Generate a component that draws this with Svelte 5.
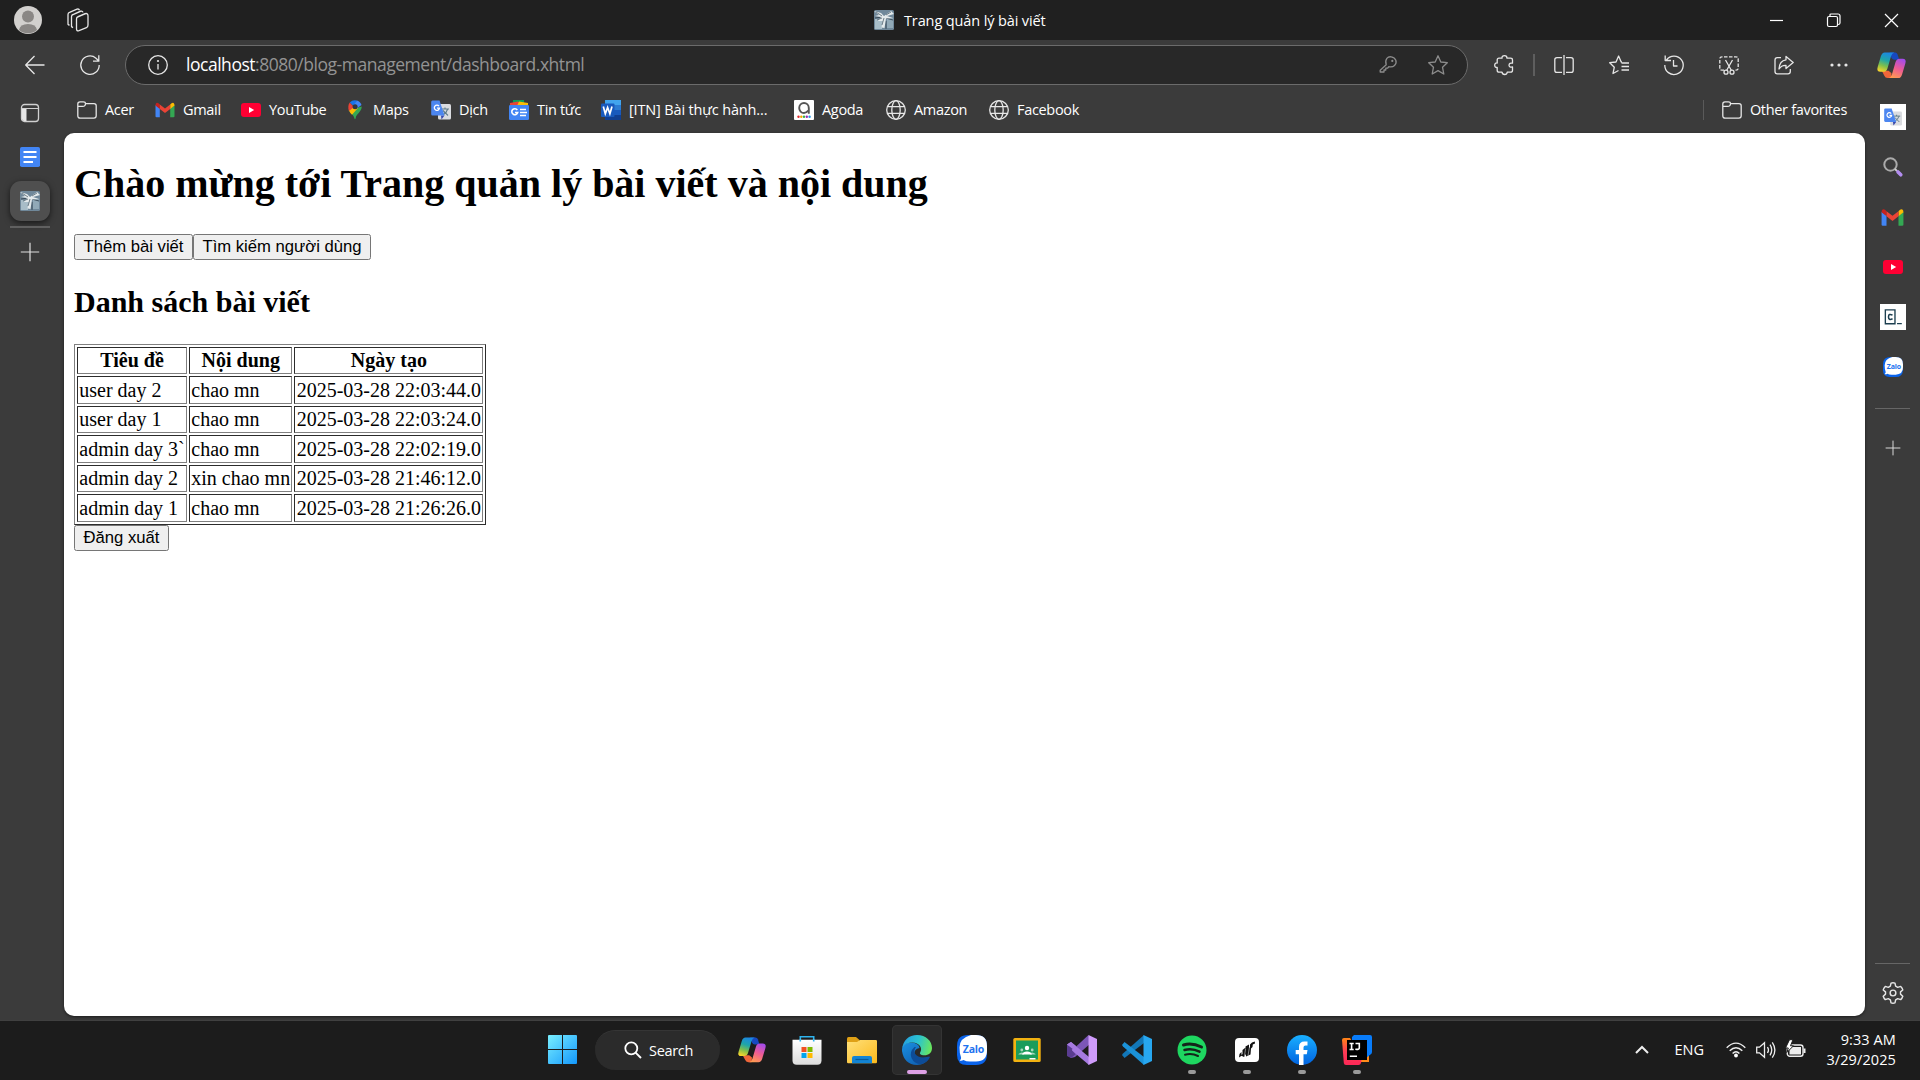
<script>
  const bookmarks = [
    { icon: 'folder', label: 'Acer', width: 78 },
    { icon: 'gmail', label: 'Gmail', width: 86 },
    { icon: 'youtube', label: 'YouTube', width: 104 },
    { icon: 'maps', label: 'Maps', width: 86 },
    { icon: 'translate', label: 'Dịch', width: 78 },
    { icon: 'news', label: 'Tin tức', width: 92 },
    { icon: 'word', label: '[ITN] Bài thực hành...', width: 193, loose: true },
    { icon: 'agoda', label: 'Agoda', width: 92 },
    { icon: 'globe', label: 'Amazon', width: 103 },
    { icon: 'globe', label: 'Facebook', width: 110 }
  ];
  const tools = ['split', 'favorites', 'history', 'snip', 'share', 'dots'];
  const posts = [
    ['user day 2', 'chao mn', '2025-03-28 22:03:44.0'],
    ['user day 1', 'chao mn', '2025-03-28 22:03:24.0'],
    ['admin day 3`', 'chao mn', '2025-03-28 22:02:19.0'],
    ['admin day 2', 'xin chao mn', '2025-03-28 21:46:12.0'],
    ['admin day 1', 'chao mn', '2025-03-28 21:26:26.0']
  ];
  const apps = [
    { icon: 'copilot', size: 28 },
    { icon: 'store', size: 30 },
    { icon: 'explorer', size: 30 },
    { icon: 'edge', size: 30, active: true },
    { icon: 'zalo', size: 30 },
    { icon: 'classroom', size: 30 },
    { icon: 'vs', size: 30 },
    { icon: 'vscode', size: 30 },
    { icon: 'spotify', size: 30, running: true },
    { icon: 'capcut', size: 30, running: true },
    { icon: 'facebook', size: 30, running: true },
    { icon: 'idea', size: 30, running: true }
  ];
  const largeGrid = apps.map((a) => a.icon);
</script>

{#snippet icon(name, size = 20)}
  <svg class="icon" width={size} height={size} viewBox={largeGrid.includes(name) ? '0 0 30 30' : '0 0 20 20'}>
    {#if name === 'folder'}
      <path class="ln" d="M.8 15.5V4Q.8 1.800 3 1.800H6.300Q8.500 1.800 8.500 3.600H17Q19.200 3.600 19.200 5.800V15.800Q19.200 18.200 16.800 18.200H3.200Q.8 18.200 .8 15.500Z M.8 6.300H5.600Q8.500 6.300 8.500 3.600" />
    {:else if name === 'gmail'}
      <path fill="#4285f4" d="M.5 5V16.200Q.5 17.200 1.600 17.200H4.800V8.200Z" />
      <path fill="#34a853" d="M19.500 5V16.200Q19.500 17.200 18.400 17.200H15.200V8.200Z" />
      <path fill="#fbbc04" d="M15.200 4.500Q17 2.300 18.600 3Q19.500 3.500 19.500 5.500L15.200 9Z" />
      <path fill="#c5221f" d="M4.800 4.500Q3 2.300 1.400 3Q.5 3.500 .5 5.500L4.800 9Z" />
      <path fill="#ea4335" d="M4.800 4.500L10 8.500L15.200 4.500V9L10 13L4.800 9Z" />
    {:else if name === 'youtube'}
      <rect y="3" width="20" height="14" rx="3" fill="#f03" /><path fill="#fff" d="M8 7L13.200 10L8 13Z" />
    {:else if name === 'maps'}
      <path fill="#34a853" d="M3.600 10C5 13 9 15 9.300 18Q10 20.500 10.700 18C11 14 17 11.500 16.700 6.500Z" />
      <path fill="#fbbc04" d="M3.800 10.300Q5 13 7 14.700L13 8L8 6Z" />
      <path fill="#ea4335" d="M4.800 2.500L9 7L4 11Q2.200 6 4.800 2.500Z" />
      <path fill="#1a73e8" d="M4.800 2.500Q7.500-.5 12 .5L9 6.500Z" /><path fill="#4285f4" d="M12 .5Q15.500 1.500 16.500 5L11 9L8.800 5Z" />
      <circle cx="10.100" cy="6.700" r="2.500" fill="#303640" />
    {:else if name === 'translate'}
      <rect x="7" y="4" width="13" height="15.500" rx="1.500" fill="#dadce0" />
      <path stroke="#607d8b" fill="none" stroke-width="1.100" d="M10.500 9H18M14 7.500V9M16.700 9Q15.500 13 12 15M12 10.500L17 15.500" />
      <path fill="#3949ab" d="M10 15.500H13.500L10.500 19.500Z" />
      <path fill="#4c86f0" d="M1.500.5H8.500L13.500 15.500H1.500Q.2 15.500 .2 14V2Q.2.5 1.500.5Z" />
      <path stroke="#fff" fill="none" stroke-width="1.300" d="M8 6.200A2.600 2.600 0 1 0 8.500 8.200H6" />
    {:else if name === 'news'}
      <path fill="#0c9d58" d="M4 0H15V6H4Z" /><path fill="#ea4335" d="M1 3L9 1.500L14 5H1Z" /><path fill="#fbbc04" d="M10 1.500L19 3V6H8Z" />
      <rect y="5" width="20" height="15" rx="1.300" fill="#4285f4" />
      <path stroke="#fff" fill="none" stroke-width="1.600" d="M8.300 10A3 3 0 1 0 8.700 12.500H6M11 9.500H17M11 12.500H18M11 15.500H17" />
    {:else if name === 'word'}
      <path fill="#41a5ee" d="M4 0H20V5H4Z" /><path fill="#2b7cd3" d="M4 5H20V10H4Z" /><path fill="#185abd" d="M4 10H20V15H4Z" /><path fill="#103f91" d="M4 15H20V20H4Z" />
      <rect y="3.500" width="13.500" height="13.500" rx="1" fill="#185abd" /><path stroke="#fff" fill="none" stroke-width="1.700" d="M2.300 6.500L4.300 13.700L6.600 7.500L8.900 13.700L11 6.500" />
    {:else if name === 'agoda'}
      <rect width="20" height="20" rx="1" fill="#fff" />
      <path stroke="#555" fill="none" stroke-width="1.900" d="M14.800 13.800V8A4.800 5 0 1 0 10 13Q12.300 13 14.300 10.500" />
      <circle cx="4.500" cy="16.800" r="1.200" fill="#e12d2d" /><circle cx="7.300" cy="16.800" r="1.200" fill="#f7a700" /><circle cx="10" cy="16.800" r="1.200" fill="#35b24a" /><circle cx="12.800" cy="16.800" r="1.200" fill="#9b26af" /><circle cx="15.600" cy="16.800" r="1.200" fill="#2397e8" />
    {:else if name === 'globe'}
      <g class="ln"><circle cx="10" cy="10" r="9.300" /><ellipse cx="10" cy="10" rx="4.200" ry="9.300" /><path d="M1.500 6.700H18.500M1.500 13.300H18.500" /></g>
    {:else if name === 'back'}
      <path class="ln" d="M19.500 10H.8M9.500 1L.7 10L9.500 19" />
    {:else if name === 'refresh'}
      <path class="ln" d="M19.200 10A9.200 9.200 0 1 1 16 3.200L18.800 6M18.800.3V6.200H13" />
    {:else if name === 'info'}
      <circle class="ln" cx="10" cy="10" r="9.300" /><path class="ln" d="M10 9V14.500" /><circle cx="10" cy="6" r="1.100" fill="#e6e6e6" />
    {:else if name === 'key'}
      <g class="ln"><path d="M8.200 9.800C6.500 4 10 1.300 13.200 1.800C18 2.500 19.600 7.500 16.500 10.500Q14.300 12.600 10.800 11.700L9.500 13.200H7.800V15H6V17H2.200V15.200Z" /></g><circle cx="14.300" cy="5.900" r="1.100" fill="#8c8c8c" />
    {:else if name === 'star'}
      <path class="ln" d="M10 .8L12.800 7L19.300 7.700L14.500 12.200L15.800 19L10 15.600L4.200 19L5.500 12.200L.7 7.700L7.200 7Z" />
    {:else if name === 'puzzle'}
      <path class="ln" d="M5 3.200H8Q7.800.7 10.500.7Q13 .7 13 3.200H16.500Q18.500 3.200 18.500 5V8.200Q15.200 7.500 15 10.200Q15.200 12.700 18.500 12V15.500Q18.500 17.200 16.500 17.200H13.200Q13 19.500 10.700 19.500Q8.300 19.500 8 17.200H5Q3.200 17.200 3.200 15.500V12.500Q.7 12.700.7 10.200Q.7 7.700 3.200 8V5Q3.200 3.200 5 3.200Z" />
    {:else if name === 'split'}
      <path class="ln" d="M8 2.600H3Q.8 2.600.8 4.800V15.200Q.8 17.400 3 17.400H8M12 2.600H17Q19.200 2.600 19.200 4.800V15.200Q19.200 17.400 17 17.400H12M10 0V20" />
    {:else if name === 'favorites'}
      <path class="ln" d="M13 7H12.200L9.600 1L7 7L.7 7.700L5.300 12.200L4 18.500L9.500 15.500M12.500 8H20M12.500 11.500H20M12.500 15H20" />
    {:else if name === 'history'}
      <path class="ln" d="M2.500 5A9.200 9.200 0 1 1 .8 10M1.200.5V5.500H7M9.500 5V11H13.500" />
    {:else if name === 'snip'}
      <path class="ln dash" d="M5 15.200H2.800Q.8 15.200.8 13V4Q.8 1.800 3 1.800H17Q19.200 1.800 19.200 4V13Q19.200 15.200 17 15.200H15" />
      <g class="ln"><path d="M6.500 5L12.300 15.300M13.500 5L7.700 15.300" /><circle cx="7" cy="17.200" r="2" /><circle cx="13" cy="17.200" r="2" /></g>
    {:else if name === 'share'}
      <path class="ln" d="M7 2.600H3.300Q1 2.600 1 5V16.500Q1 18.800 3.300 18.800H14Q16.300 18.800 16.300 16.500V14M12 1.500L19.200 7.500L12 13.500V10.300Q7.500 10 5 14Q5.500 5.500 12 4.800Z" />
    {:else if name === 'dots'}
      <g fill="#e6e6e6"><circle cx="3" cy="10" r="1.600" /><circle cx="10" cy="10" r="1.600" /><circle cx="17" cy="10" r="1.600" /></g>
    {:else if name === 'favicon'}
      <rect width="20" height="20" rx="1.500" fill="#70889a" /><path fill="#a8bdc8" d="M1 9H8V19H1Z" /><path fill="#91a9b7" d="M13 8H19V18H13Z" />
      <path stroke="#3d4e5c" fill="none" d="M1 8L8 7L19 10M12 11V19" />
      <path fill="#e4eaec" d="M0 1L7 3L10 6L17 1L20 4L13 6L19 8L12 8.500L10.500 18L7.500 17.500L8.500 11L4 11L7 7L1 6L5 5Z" />
      <path stroke="#536570" fill="none" stroke-width=".8" d="M2 2L8 6M12 5L17 2M8 8L3 10M10 8L8 15" />
    {:else if name === 'tabs'}
      <rect x="1.500" y="1.500" width="17" height="17" rx="3" fill="none" stroke="#d0d0d0" stroke-width="1.300" /><path fill="#e6e6e6" d="M2 5.500H6.500V18H4Q2 18 2 16Z" /><path stroke="#d0d0d0" d="M2 5.500H18" />
    {:else if name === 'docs'}
      <rect width="20" height="20" rx="1.800" fill="#4285f4" /><path stroke="#fff" stroke-width="2" d="M3.500 5H16.500M3.500 10H16.500M3.500 15H13" />
    {:else if name === 'plus'}
      <path stroke="#e0e0e0" stroke-width="1.200" d="M10 .8V19.200M.8 10H19.200" />
    {:else if name === 'search'}
      <circle cx="7.500" cy="7.500" r="6.200" fill="none" stroke="#aaa" stroke-width="2" /><path stroke="#d0d0d0" stroke-width="1.800" d="M12 12L14 14" /><path stroke="#b38df0" stroke-width="3.600" stroke-linecap="round" d="M15 15L17.800 17.800" />
    {:else if name === 'codecademy'}
      <path stroke="#1c3f50" stroke-width="1.500" fill="none" d="M1.500 2H12.200V17.500H1.500ZM14.500 17.300H19.800" /><path stroke="#1c3f50" stroke-width="1.700" fill="none" d="M9.500 8Q5 5.500 5 10Q5 14 9.500 12" />
    {:else if name === 'gear'}
      <path class="ln" d="M8.200 1Q10 .4 11.800 1L12.400 3.800L14.300 4.900L17 4Q18.500 5.500 18.900 7.200L16.800 9V11L18.900 12.900Q18.300 14.800 17 16L14.300 15.100L12.400 16.200L11.800 19Q10 19.600 8.200 19L7.600 16.200L5.700 15.100L3 16Q1.700 14.800 1.100 12.900L3.200 11V9L1.100 7.200Q1.600 5.500 3 4L5.700 4.900L7.600 3.800Z" /><circle class="ln" cx="10" cy="10" r="2.600" />
    {:else if name === 'chevron'}
      <path d="M4 13L10 7L16 13" stroke="#eee" stroke-width="2" fill="none" />
    {:else if name === 'wifi'}
      <g fill="none" stroke="#eee" stroke-width="1.400"><path d="M.7 7.800Q10-1.500 19.300 7.800M3.700 10.800Q10 4.500 16.300 10.800M6.600 13.500Q10 10 13.400 13.500" /></g><circle cx="10" cy="15.500" r="1.900" fill="#fff" />
    {:else if name === 'volume'}
      <path fill="none" stroke="#eee" stroke-width="1.300" d="M.7 7.200H3.500L8.500 2.700V17.300L3.500 12.800H.7ZM11.500 7Q13.500 10 11.500 13M14 4.700Q17.500 10 14 15.300M16.300 2.300Q21.500 10 16.300 17.700" />
    {:else if name === 'battery'}
      <rect x="1.300" y="5" width="15.700" height="11.300" rx="2.500" fill="none" stroke="#eee" stroke-width="1.400" /><path fill="#eee" d="M3.500 7H15V14.500H3.500ZM17.500 8.500H19.500V13H17.500Z" /><path fill="#fff" stroke="#1c1c1c" d="M3.500-.3L-.5 8H2.300L.8 12.500L7.500 5.800H4.500L7-.3Z" />
    {:else if name === 'copilot'}
      <defs>
        <linearGradient id="cpA" x1=".6" y1="0" x2=".3" y2="1"><stop offset="0" stop-color="#1c86e4" /><stop offset=".4" stop-color="#1fa6a8" /><stop offset=".7" stop-color="#7fbf4c" /><stop offset="1" stop-color="#f5d42c" /></linearGradient>
        <linearGradient id="cpB" x1=".7" y1="0" x2=".3" y2="1"><stop offset="0" stop-color="#a54bea" /><stop offset=".5" stop-color="#ee5c93" /><stop offset="1" stop-color="#ff9a52" /></linearGradient>
      </defs>
      <path fill="#1748c0" d="M13 1.500H18.800Q20.600 1.500 21.300 3.600L23 9H18Q16 9 15 7Z" />
      <path fill="#f0663a" d="M5 20.500H12L15 23L14.500 28H11Q8.500 28 7.600 25.500Z" />
      <path fill="url(#cpA)" d="M8 1.500H18Q15.500 2 14.500 5.500L10.800 18Q9.800 21.500 6.500 21.500H3.500Q-.8 21.500 .7 16.500L4 5.500Q5.200 1.500 8 1.500Z" />
      <path fill="url(#cpB)" d="M23.500 8H26.500Q30.800 8 29.300 13L26 24Q24.800 28 22 28H12Q14.500 27.500 15.500 24L19.200 11.500Q20.200 8 23.500 8Z" />
    {:else if name === 'store'}
      <defs><linearGradient id="st" x2="0" y2="1"><stop stop-color="#fff" /><stop offset="1" stop-color="#dcdcdc" /></linearGradient></defs>
      <path fill="none" stroke="#2fb4ee" stroke-width="1.600" d="M8.300 6.500V1.800H21.700V6.500" /><path fill="url(#st)" d="M.5 4.800H29.500V25.500Q29.500 29.700 25.300 29.700H4.700Q.5 29.700.5 25.500Z" /><path fill="none" stroke="#2fb4ee" stroke-width="1.600" d="M8.300 4.500V6.500M21.700 4.500V6.500" />
      <path fill="#f25022" d="M9.500 12H14.500V17H9.500Z" /><path fill="#7fba00" d="M15.500 12H20.500V17H15.500Z" /><path fill="#00a4ef" d="M9.500 18H14.500V23H9.500Z" /><path fill="#ffb900" d="M15.500 18H20.500V23H15.500Z" />
    {:else if name === 'explorer'}
      <defs><linearGradient id="ex" x2="1" y2="1"><stop stop-color="#ffe07a" /><stop offset="1" stop-color="#fbb91c" /></linearGradient></defs>
      <path fill="#dfa016" d="M0 3.500Q0 2 1.500 2H9L12.500 5V10H0Z" /><path fill="url(#ex)" d="M0 7H10L13 5H28.800Q30 5 30 6.300V27Q30 28.300 28.800 28.300H1.200Q0 28.300 0 27Z" />
      <path fill="#1384d4" d="M5 28.300V23Q5 21 7 21H23Q25 21 25 23V28.300Z" /><path stroke="#075a9b" stroke-width="1.200" d="M8.500 24.500H21.500" />
    {:else if name === 'edge'}
      <defs>
        <linearGradient id="eg1" x1="0" y1=".4" x2="1" y2=".6"><stop stop-color="#259fe0" /><stop offset=".5" stop-color="#2bc3d0" /><stop offset="1" stop-color="#6be85a" /></linearGradient>
        <linearGradient id="eg2" x2=".8" y2="1"><stop stop-color="#1a90e0" /><stop offset="1" stop-color="#0f5cae" /></linearGradient>
      </defs>
      <path fill="url(#eg2)" d="M0 14Q1 7.500 9 7.500Q17 8 17.500 13Q12 14 12.500 19Q14 25 27.500 22Q23.500 30 15 30Q2 29.500 0 16Z" />
      <path fill="#0d4c98" d="M12.500 12Q7 17 9.500 23Q12.500 29.500 20 29Q26 26.500 27.700 22.500Q28 21 26 21.800Q17 24 12.800 18.500Q11.500 15 14 12Z" />
      <path fill="url(#eg1)" d="M0 14.500C1 5 7 0 15 0C24 0 30 6 30 13C30 18 26.500 20.300 22.500 20.300C18.500 20.300 17.200 18.600 18.300 17.200C21 13 17 7.500 10.500 7.500C5 7.500 1 10 0 14.500Z" />
    {:else if name === 'zalo'}
      <path fill="#0a63ea" d="M11 0H19Q30 0 30 11V19Q30 30 19 30H10Q0 30 0 20V11Q0 0 11 0Z" />
      <path fill="#fff" d="M14 0H19Q30 0 30 11V15.500Q30 26.500 19 26.500H13Q9 26.500 6.500 25Q4.500 26.300 2.500 25.500Q4.800 24 3.800 21.500Q2.500 18 2.500 12.500Q2.500 3 14 0Z" />
      <text class="zalo" x="5.800" y="17.800" textLength="21.500">Zalo</text>
    {:else if name === 'classroom'}
      <rect x="1.300" y="3" width="27.400" height="24" rx="1.500" fill="#f2b211" /><path fill="#1a9c5b" d="M4 5.500H26V24.500H4Z" />
      <g fill="#a5d8bd"><circle cx="9.800" cy="15" r="1.400" /><circle cx="20.200" cy="15" r="1.400" /><path d="M6.500 19Q9 16.500 12 18V19.500H6.500ZM23.500 19Q21 16.500 18 18V19.500H23.500Z" /></g>
      <circle cx="15" cy="13" r="2.200" fill="#fff" /><path fill="#fff" d="M10 19.500Q11 16.500 15 16.500T20 19.500ZM17.500 23H23.500V24.500H17.500Z" />
    {:else if name === 'vs'}
      <path fill="#7c56b8" d="M4 23L8 22L24 8L21.500 0L0 20Z" /><path fill="#a67ae0" d="M0 9.500L4 7L22 22V30L2 13Z" /><path fill="#5a3c90" d="M0 9.500V21L4 23L8.500 19.300L4.500 15L6.500 13Z" /><path fill="#a67ae0" d="M0 9.500L4 7L9 11L7 15Z" /><path fill="#cf9bfb" d="M21.500 0L30 4V26L21.500 30Z" />
    {:else if name === 'vscode'}
      <path fill="#1277b8" d="M0 20L2.500 23L22 8V0L1 18.500Z" /><path fill="#1b92d8" d="M0 10L2.500 7L22 22V30L1 11.500Z" /><path fill="#27a7f0" d="M21.500 0L30 4V26L21.500 30Z" />
    {:else if name === 'spotify'}
      <circle cx="15" cy="15" r="14.500" fill="#1ed760" /><g fill="none" stroke="#14251a" stroke-linecap="round"><path stroke-width="3" d="M6.500 10Q15 7.500 24.500 12" /><path stroke-width="2.500" d="M7.500 15Q15 12.800 22.500 16.700" /><path stroke-width="2" d="M8 19.700Q15 18 21 21" /></g>
    {:else if name === 'capcut'}
      <rect x="3" y="3" width="24" height="24" rx="4" fill="#fff" /><path fill="#111" d="M7 22.500L7.500 19L9.500 17V20L10.500 19V15L13 13L13.500 14V11.500L17 9.500V12L18 13V9.500L20 7.500L22.800 6.500L23 8.500L20.800 9.500L20.500 12L19 13.500L18.500 19.500L14 21.500V19L12 22L9.500 20.800Z" /><path stroke="#fff" stroke-width=".5" d="M13.500 14L12.500 21M17.500 12L16 20.500" />
    {:else if name === 'facebook'}
      <defs><linearGradient id="fb" x2="0" y2="1"><stop stop-color="#19afff" /><stop offset="1" stop-color="#0163e0" /></linearGradient></defs>
      <circle cx="15" cy="15" r="15" fill="url(#fb)" /><path fill="#fff" d="M12 30V19.200H8.700V15H12V12Q12 6.500 17.500 6.500H20.500V10.500H18.500Q16.500 10.500 16.500 12.500V15H20.500L19.800 19.200H16.500V30Z" />
    {:else if name === 'idea'}
      <defs><linearGradient id="ij" x2="0" y2="1"><stop stop-color="#ff8516" /><stop offset=".5" stop-color="#fd3c55" /><stop offset="1" stop-color="#fe2857" /></linearGradient></defs>
      <path fill="#ff8a1a" d="M17 17H27V27H17Z" /><path fill="#087cfa" d="M12 0H28Q30 0 30 2V17Q30 18.500 28.500 19.500L24 23L10 12V2Z" /><path fill="url(#ij)" d="M0 5Q0 3 2 3H8L20 22L19 28Q18.500 30 16.500 30H4Q2 30 1.800 28Z" />
      <path d="M5 5H25V25H5Z" /><path fill="none" stroke="#fff" stroke-width="1.600" d="M7.500 8.500H11.700M9.600 8.500V14.200M7.500 14.500H11.700M13.500 8.500H17.300V13Q17.300 14.800 13.300 14.300M7.800 21.300H15" />
    {/if}
  </svg>
{/snippet}

<div class="screen">
  <header class="titlebar">
    <svg class="avatar" width="28" height="28" viewBox="0 0 28 28"><circle cx="14" cy="14" r="14" fill="#d2d0ce" /><circle cx="14" cy="10.500" r="6" fill="#8a8785" /><path fill="#8a8785" d="M5 24Q6 18 14 18T23 24A14 14 0 0 1 5 24Z" /></svg>
    <svg class="spaces" width="22" height="24" viewBox="0 0 22 22" preserveAspectRatio="none"><g class="ln"><path d="M2.500 16L1 15V6Q1 4.500 2.500 4L10 1Q12 .5 12.500 2" /><path d="M6 18L4.500 17V8Q4.500 6.500 6 6L13.500 3Q15.500 2.500 16 4" /><path d="M9.500 10Q9.500 8.500 11 8L18 5.300Q21 4.500 21 7V15.500Q21 17.500 19.500 18L12 20.800Q9.500 21.500 9.500 19Z" /></g></svg>
    <div class="title">{@render icon('favicon')}<span>Trang quản lý bài viết</span></div>
    <svg class="winbtns" width="130" height="16" viewBox="0 0 130 16"><g fill="none" stroke="#fff" stroke-width="1.200"><path d="M1 8.500H14" /><rect x="58.500" y="4.500" width="10" height="10" rx="1.500" /><path d="M61 4.500V2.500Q61 2 62 2H69Q71 2 71 4V11Q71 12.500 69 12.500" /><path d="M116 2L129 15M129 2L116 15" /></g></svg>
  </header>

  <nav class="toolbar">
    <div class="back">{@render icon('back')}</div>
    <div class="reload">{@render icon('refresh')}</div>
    <div class="address">
      {@render icon('info')}
      <p class="url"><b>localhost</b>:8080/blog-management/dashboard.xhtml</p>
      <div class="dim">{@render icon('key')}</div>
      <div class="dim star">{@render icon('star')}</div>
    </div>
    <div class="ext">{@render icon('puzzle')}</div>
    <i class="sep"></i>
    <div class="tools">
      {#each tools as t}{@render icon(t)}{/each}
    </div>
    {@render icon('copilot', 29)}
  </nav>

  <div class="middle">
    <aside class="left">
      {@render icon('tabs')}
      <div class="docs">{@render icon('docs')}</div>
      <div class="active-tab">{@render icon('favicon')}</div>
      <i class="rule"></i>
      {@render icon('plus')}
    </aside>

    <div class="center">
      <div class="bookmarks">
        {#each bookmarks as b}
          <div class="bookmark" class:loose={b.loose} style="width: {b.width}px">{@render icon(b.icon)}<span>{b.label}</span></div>
        {/each}
        <div class="other">{@render icon('folder')}<span>Other favorites</span></div>
      </div>

      <main class="page">
        <div class="document">
          <h1>Chào mừng tới Trang quản lý bài viết và nội dung</h1>
          <div class="actions"><button>Thêm bài viết</button><button>Tìm kiếm người dùng</button></div>
          <h2>Danh sách bài viết</h2>
          <table border="1">
            <thead><tr><th>Tiêu đề</th><th>Nội dung</th><th>Ngày tạo</th></tr></thead>
            <tbody>
              {#each posts as row}
                <tr>{#each row as cell}<td>{cell}</td>{/each}</tr>
              {/each}
            </tbody>
          </table>
          <div class="actions"><button>Đăng xuất</button></div>
        </div>
      </main>
    </div>

    <aside class="right">
      <div class="slots">
        <div class="slot tile">{@render icon('translate', 18)}</div>
        <div class="slot">{@render icon('search')}</div>
        <div class="slot">{@render icon('gmail', 23)}</div>
        <div class="slot">{@render icon('youtube')}</div>
        <div class="slot tile">{@render icon('codecademy', 18)}</div>
        <div class="slot">{@render icon('zalo')}</div>
      </div>
      <i class="rule"></i>
      {@render icon('plus', 16)}
      <div class="bottom"><i class="rule"></i>{@render icon('gear', 22)}</div>
    </aside>
  </div>

  <footer class="taskbar">
    <svg class="start" width="29" height="29" viewBox="0 0 29 29"><defs><linearGradient id="win" gradientUnits="userSpaceOnUse" x1="0" y1="0" x2="29" y2="29"><stop stop-color="#79efff" /><stop offset="1" stop-color="#1397fc" /></linearGradient></defs><path fill="url(#win)" d="M0 1Q0 0 1 0H14V14H0ZM15 0H28Q29 0 29 1V14H15ZM0 15H14V29H1Q0 29 0 28ZM15 15H29V28Q29 29 28 29H15Z" /></svg>
    <div class="search"><svg width="18" height="18" viewBox="0 0 18 18"><path fill="none" stroke="#fff" stroke-width="1.900" d="M11.300 11.300L17 17" /><circle cx="7.300" cy="7.300" r="6" fill="none" stroke="#fff" stroke-width="1.800" /></svg><span>Search</span></div>
    <div class="apps">
      {#each apps as a}
        <div class="app" class:active={a.active} class:running={a.running}>{@render icon(a.icon, a.size)}</div>
      {/each}
    </div>
    <div class="tray">
      {@render icon('chevron')}
      <span class="lang">ENG</span>
      {@render icon('wifi')}{@render icon('volume')}{@render icon('battery')}
      <div class="clock"><span>9:33 AM</span><span>3/29/2025</span></div>
    </div>
  </footer>
</div>

<style>
  :global(body) { margin: 0; overflow: hidden; }
  .screen { display: flex; flex-direction: column; width: 1920px; height: 1080px; background: #3b3b3b; color: #fff; font: 14.500px 'Open Sans', 'Noto Sans', sans-serif; letter-spacing: -.32px; white-space: nowrap; }
  .icon { display: block; flex: none; overflow: visible; }
  .ln, .ln :global(*) { fill: none; stroke: #e6e6e6; stroke-width: 1.300; stroke-linejoin: round; }
  .dash { stroke-dasharray: 3.500 1.500; }
  .zalo { font: 700 10.500px 'Open Sans', sans-serif; letter-spacing: 0; fill: #1e73f0; }

  .titlebar { display: flex; align-items: center; height: 40px; background: #202020; padding: 0 21px 0 14px; box-sizing: border-box; }
  .spaces { margin-left: 25px; }
  .title { display: flex; align-items: center; gap: 10px; margin-left: 785px; flex: 1; letter-spacing: -.12px; }
  .winbtns { flex: none; }

  .toolbar { display: flex; align-items: center; height: 50px; box-sizing: border-box; padding-left: 25px; }
  .back { margin-right: 35px; }
  .reload { margin-right: 25px; }
  .address { display: flex; align-items: center; width: 1343px; height: 40px; box-sizing: border-box; padding: 0 19px 0 22px; border: 1px solid #6b6b6b; border-radius: 20px; background: #282828; }
  .url { flex: 1; margin: 0 0 2px 18px; font-size: 17.500px; letter-spacing: -.47px; color: #939393; }
  .url b { font-weight: 400; color: #fff; }
  .dim :global(.ln), .dim :global(.ln *) { stroke: #8c8c8c; }
  .star { margin-left: 30px; }
  .ext { margin: 0 19px 0 26px; }
  .sep { width: 2px; height: 22px; background: #5e5e5e; margin-right: 19px; }
  .tools { display: flex; gap: 35px; margin-right: 28px; }

  .middle { display: flex; flex: 1; min-height: 0; }
  .left { width: 64px; display: flex; flex-direction: column; align-items: center; box-sizing: border-box; padding: 13px 4px 0 0; }
  .docs { margin: 24px 0 14px; }
  .active-tab { display: grid; place-items: center; width: 40px; height: 40px; border-radius: 11px; background: #4f4f4f; box-shadow: 0 2px 6px #0009; }
  .left .rule { width: 40px; height: 2px; background: #606060; margin: 5px 0 14px; }
  .center { width: 1801px; display: flex; flex-direction: column; }
  .bookmarks { display: flex; align-items: center; height: 43px; box-sizing: border-box; padding: 0 18px 3px 13px; }
  .bookmark, .other { display: flex; align-items: center; gap: 8px; }
  .bookmark span, .other span { padding-bottom: 1px; }
  .loose { letter-spacing: -.15px; }
  .other { margin-left: auto; padding-left: 18px; border-left: 1px solid #5a5a5a; height: 20px; }
  .page { height: 883px; background: #fff; border-radius: 10px; box-shadow: 0 1px 3px #0008; }

  /* 125% page zoom over the browser's default sizes */
  .document { zoom: 1.25; display: flow-root; padding: 0 8px; color: #000; font: 16px 'Liberation Serif', 'Times New Roman', serif; letter-spacing: normal; }
  h1 { font-size: 32px; margin: 21.440px 0; }
  h2 { font-size: 24px; margin: 19.920px 0; }
  .actions { display: flex; }
  button { font: 13.333px 'Liberation Sans', Arial, sans-serif; padding: 1px 6px; }

  .right { width: 55px; display: flex; flex-direction: column; align-items: center; padding-top: 14px; box-sizing: border-box; }
  .slots { display: flex; flex-direction: column; gap: 24px; }
  .slot { display: grid; place-items: center; width: 26px; height: 26px; }
  .tile { background: #fff; }
  .right .rule { width: 35px; height: 1px; background: #666; margin: 28px 0 31px; }
  .bottom { margin: auto 0 16px; display: flex; flex-direction: column; align-items: center; }
  .bottom .rule { margin: 0 0 18px; }

  .taskbar { display: flex; align-items: center; height: 60px; box-sizing: border-box; border-top: 1px solid #404040; background: #1c1c1c; padding: 0 0 2px 548px; }
  .search { display: flex; align-items: center; gap: 7px; width: 125px; height: 40px; box-sizing: border-box; padding-left: 29px; margin: 0 7px 0 18px; border-radius: 20px; background: #2b2b2b; border-top: 1px solid #353535; }
  .apps { display: flex; gap: 5px; }
  .app { position: relative; display: grid; place-items: center; width: 50px; height: 50px; border-radius: 5px; box-sizing: border-box; }
  .active { background: #2a2a2a; box-shadow: inset 0 0 0 1px #343434; }
  .active::after, .running::after { content: ''; position: absolute; bottom: 1px; left: 21px; width: 8px; height: 4px; border-radius: 2px; background: #9a9a9a; }
  .active::after { left: 15px; width: 20px; background: #dda0e5; }
  .tray { display: flex; align-items: center; gap: 10px; margin-left: auto; padding-right: 24px; }
  .lang { margin: 0 12px; letter-spacing: 0; }
  .clock { display: flex; flex-direction: column; text-align: right; line-height: 20px; width: 80px; letter-spacing: .1px; }
</style>
